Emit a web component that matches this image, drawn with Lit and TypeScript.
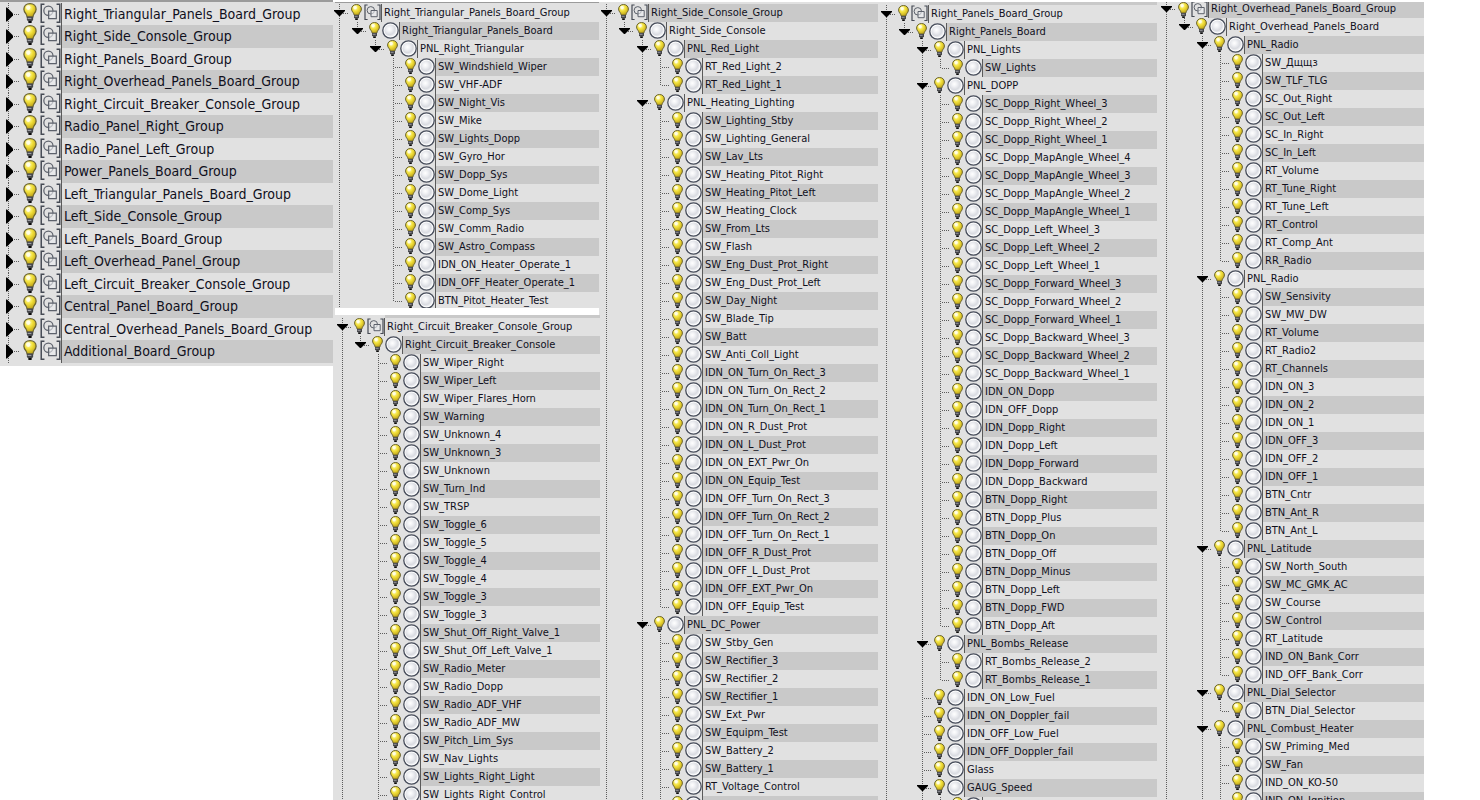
import { LitElement, html, css, svg, nothing } from "lit";
import { customElement } from "lit/decorators.js";

interface TreeRow {
  depth: number;
  name: string;
  open: boolean;
}

interface Tree {
  rows: TreeRow[];
  /** Levels whose guide line runs on past the last listed row. */
  running: number[];
}

/** One row per line, ">" marks a branch, each leading dot is one level. */
function tree(source: string, running: number[]): Tree {
  const rows = source
    .trim()
    .split("\n")
    .map((line) => {
      const [, dots, mark, name] = /^\s*(\.*)(>?)(.*)$/.exec(line)!;
      return { depth: dots.length, open: mark === ">", name: name.trim() };
    });
  return { rows, running };
}

function continues(t: Tree, index: number, level: number): boolean {
  for (let i = index + 1; i < t.rows.length; i++) {
    if (t.rows[i].depth < level) return false;
    if (t.rows[i].depth === level) return true;
  }
  return t.running.includes(level);
}

const GROUPS = [
  "Right_Triangular_Panels_Board_Group",
  "Right_Side_Console_Group",
  "Right_Panels_Board_Group",
  "Right_Overhead_Panels_Board_Group",
  "Right_Circuit_Breaker_Console_Group",
  "Radio_Panel_Right_Group",
  "Radio_Panel_Left_Group",
  "Power_Panels_Board_Group",
  "Left_Triangular_Panels_Board_Group",
  "Left_Side_Console_Group",
  "Left_Panels_Board_Group",
  "Left_Overhead_Panel_Group",
  "Left_Circuit_Breaker_Console_Group",
  "Central_Panel_Board_Group",
  "Central_Overhead_Panels_Board_Group",
  "Additional_Board_Group",
];

const TRIANGULAR = tree(
  `>Right_Triangular_Panels_Board_Group
.>Right_Triangular_Panels_Board
..>PNL_Right_Triangular
...SW_Windshield_Wiper
...SW_VHF-ADF
...SW_Night_Vis
...SW_Mike
...SW_Lights_Dopp
...SW_Gyro_Hor
...SW_Dopp_Sys
...SW_Dome_Light
...SW_Comp_Sys
...SW_Comm_Radio
...SW_Astro_Compass
...IDN_ON_Heater_Operate_1
...IDN_OFF_Heater_Operate_1
...BTN_Pitot_Heater_Test`,
  [0]
);

const BREAKER = tree(
  `>Right_Circuit_Breaker_Console_Group
.>Right_Circuit_Breaker_Console
..SW_Wiper_Right
..SW_Wiper_Left
..SW_Wiper_Flares_Horn
..SW_Warning
..SW_Unknown_4
..SW_Unknown_3
..SW_Unknown
..SW_Turn_Ind
..SW_TRSP
..SW_Toggle_6
..SW_Toggle_5
..SW_Toggle_4
..SW_Toggle_4
..SW_Toggle_3
..SW_Toggle_3
..SW_Shut_Off_Right_Valve_1
..SW_Shut_Off_Left_Valve_1
..SW_Radio_Meter
..SW_Radio_Dopp
..SW_Radio_ADF_VHF
..SW_Radio_ADF_MW
..SW_Pitch_Lim_Sys
..SW_Nav_Lights
..SW_Lights_Right_Light
..SW_Lights_Right_Control`,
  [0, 2]
);

const SIDE = tree(
  `>Right_Side_Console_Group
.>Right_Side_Console
..>PNL_Red_Light
...RT_Red_Light_2
...RT_Red_Light_1
..>PNL_Heating_Lighting
...SW_Lighting_Stby
...SW_Lighting_General
...SW_Lav_Lts
...SW_Heating_Pitot_Right
...SW_Heating_Pitot_Left
...SW_Heating_Clock
...SW_From_Lts
...SW_Flash
...SW_Eng_Dust_Prot_Right
...SW_Eng_Dust_Prot_Left
...SW_Day_Night
...SW_Blade_Tip
...SW_Batt
...SW_Anti_Coll_Light
...IDN_ON_Turn_On_Rect_3
...IDN_ON_Turn_On_Rect_2
...IDN_ON_Turn_On_Rect_1
...IDN_ON_R_Dust_Prot
...IDN_ON_L_Dust_Prot
...IDN_ON_EXT_Pwr_On
...IDN_ON_Equip_Test
...IDN_OFF_Turn_On_Rect_3
...IDN_OFF_Turn_On_Rect_2
...IDN_OFF_Turn_On_Rect_1
...IDN_OFF_R_Dust_Prot
...IDN_OFF_L_Dust_Prot
...IDN_OFF_EXT_Pwr_On
...IDN_OFF_Equip_Test
..>PNL_DC_Power
...SW_Stby_Gen
...SW_Rectifier_3
...SW_Rectifier_2
...SW_Rectifier_1
...SW_Ext_Pwr
...SW_Equipm_Test
...SW_Battery_2
...SW_Battery_1
...RT_Voltage_Control
...`,
  [0, 2, 3]
);

const PANELS = tree(
  `>Right_Panels_Board_Group
.>Right_Panels_Board
..>PNL_Lights
...SW_Lights
..>PNL_DOPP
...SC_Dopp_Right_Wheel_3
...SC_Dopp_Right_Wheel_2
...SC_Dopp_Right_Wheel_1
...SC_Dopp_MapAngle_Wheel_4
...SC_Dopp_MapAngle_Wheel_3
...SC_Dopp_MapAngle_Wheel_2
...SC_Dopp_MapAngle_Wheel_1
...SC_Dopp_Left_Wheel_3
...SC_Dopp_Left_Wheel_2
...SC_Dopp_Left_Wheel_1
...SC_Dopp_Forward_Wheel_3
...SC_Dopp_Forward_Wheel_2
...SC_Dopp_Forward_Wheel_1
...SC_Dopp_Backward_Wheel_3
...SC_Dopp_Backward_Wheel_2
...SC_Dopp_Backward_Wheel_1
...IDN_ON_Dopp
...IDN_OFF_Dopp
...IDN_Dopp_Right
...IDN_Dopp_Left
...IDN_Dopp_Forward
...IDN_Dopp_Backward
...BTN_Dopp_Right
...BTN_Dopp_Plus
...BTN_Dopp_On
...BTN_Dopp_Off
...BTN_Dopp_Minus
...BTN_Dopp_Left
...BTN_Dopp_FWD
...BTN_Dopp_Aft
..>PNL_Bombs_Release
...RT_Bombs_Release_2
...RT_Bombs_Release_1
..IDN_ON_Low_Fuel
..IDN_ON_Doppler_fail
..IDN_OFF_Low_Fuel
..IDN_OFF_Doppler_fail
..Glass
..>GAUG_Speed
...`,
  [0, 2, 3]
);

const OVERHEAD = tree(
  `>Right_Overhead_Panels_Board_Group
.>Right_Overhead_Panels_Board
..>PNL_Radio
...SW_Дщщз
...SW_TLF_TLG
...SC_Out_Right
...SC_Out_Left
...SC_In_Right
...SC_In_Left
...RT_Volume
...RT_Tune_Right
...RT_Tune_Left
...RT_Control
...RT_Comp_Ant
...RR_Radio
..>PNL_Radio
...SW_Sensivity
...SW_MW_DW
...RT_Volume
...RT_Radio2
...RT_Channels
...IDN_ON_3
...IDN_ON_2
...IDN_ON_1
...IDN_OFF_3
...IDN_OFF_2
...IDN_OFF_1
...BTN_Cntr
...BTN_Ant_R
...BTN_Ant_L
..>PNL_Latitude
...SW_North_South
...SW_MC_GMK_AC
...SW_Course
...SW_Control
...RT_Latitude
...IND_ON_Bank_Corr
...IND_OFF_Bank_Corr
..>PNL_Dial_Selector
...BTN_Dial_Selector
..>PNL_Combust_Heater
...SW_Priming_Med
...SW_Fan
...IND_ON_KO-50
...IND_ON_Ignition`,
  [0, 2, 3]
);

const bulb = html`<svg class="bulb" viewBox="0 0 11 16" aria-hidden="true">
  <path d="M5.5 .5C2.5 .5 .6 2.5 .6 5C.6 6.7 1.5 7.8 2.3 8.8C2.8 9.5 3 10.2 3.1 11H7.9C8 10.2 8.2 9.5 8.7 8.8C9.5 7.8 10.4 6.7 10.4 5C10.4 2.5 8.5 .5 5.5 .5Z"
    fill="url(#glass)" stroke="#6b6430" stroke-width="1" />
  <ellipse cx="4.1" cy="3.6" rx="1.7" ry="1.9" fill="#fffff0" opacity=".85" />
  <path d="M3 11H8V13.6L7 14.6H4L3 13.6Z" fill="#45464a" />
  <path d="M3.6 12.3H6.6" stroke="#a9abb0" stroke-width=".8" />
  <path d="M4.2 14.4H6.8V16H4.2Z" fill="#0c0c0c" />
</svg>`;

const sphere = html`<svg class="kind" viewBox="0 0 17 17" aria-hidden="true">
  <circle cx="8.5" cy="8.5" r="7.7" fill="#fff" stroke="#464c5a" stroke-width="1.3" />
  <circle cx="8.6" cy="8.6" r="6.2" fill="url(#ball)" />
</svg>`;

const group = html`<svg class="kind" viewBox="0 0 17 17" aria-hidden="true">
  <g fill="none" stroke="#454a54">
    <path d="M3.6 1H1V15.5H3.6M13.4 1H16V15.5H13.4" stroke-width="1.2" />
    <circle cx="6.8" cy="6.3" r="3.7" stroke="#5d626c" />
    <path d="M7 6.5H13.2V12.7H7Z" stroke="#5d626c" fill="#eceef1" fill-opacity=".6" />
  </g>
</svg>`;

const defs = svg`<defs>
  <radialGradient id="glass" cx="38%" cy="30%" r="72%">
    <stop offset="0" stop-color="#fffbc8" />
    <stop offset=".45" stop-color="#f3e23c" />
    <stop offset="1" stop-color="#bfa218" />
  </radialGradient>
  <radialGradient id="ball" cx="40%" cy="38%" r="64%">
    <stop offset="0" stop-color="#ffffff" />
    <stop offset=".3" stop-color="#f1f2f5" />
    <stop offset=".7" stop-color="#d9dbe1" />
    <stop offset="1" stop-color="#f6f7f9" />
  </radialGradient>
</defs>`;

@customElement("app-root")
export class AppRoot extends LitElement {
  static styles = css`
    :host {
      display: block;
      height: 100vh;
      overflow: hidden;
      background: #fff;
      color: #10101c;
      font-family: "DejaVu Sans Condensed", "DejaVu Sans", sans-serif;
      font-size: 11px;
    }
    .defs {
      display: block;
      width: 0;
      height: 0;
    }
    .board {
      display: grid;
      grid-template-columns: 333fr 267fr 280fr 280fr 264fr 56fr;
      height: 100%;
      align-items: start;
    }
    ul {
      list-style: none;
      margin: 0;
      padding: 0;
    }
    button {
      display: block;
      flex: none;
      border: 0;
      padding: 0;
      background: none;
      font: inherit;
    }
    svg {
      display: block;
      flex: none;
    }

    .overview {
      background: #e1e1e1;
      border-top: 2px solid #9b9b9b;
      padding: 1px 0 3px;
      font-size: 14px;
    }
    .column {
      height: 100vh;
      overflow: hidden;
      background: #e1e1e1;
    }
    .top {
      height: 2px;
      background: #fff;
    }
    .rule {
      height: 1px;
      margin: 0 1px 1px 2px;
      background: #9b9b9b;
    }
    .gap {
      height: 7px;
      margin: 0 1px 0 2px;
      background: #fff;
    }
    .stub {
      height: 3px;
      margin: 0 3px 0 49px;
      background: #c9c9c9;
    }
    .breaker-stub {
      margin: 0 0 0 52px;
    }
    .side-top {
      height: 2px;
    }
    .triangular {
      padding: 0 1px;
    }
    .breaker {
      padding-left: 4px;
    }
    .side {
      padding: 0 2px 0 1px;
    }
    .panels {
      padding: 0 3px 0 1px;
    }
    .overhead {
      padding-left: 1px;
    }

    .row {
      display: flex;
      height: 18px;
      overflow: hidden;
    }
    .triangular .row:last-child {
      height: 16px;
    }
    .overhead .row:first-child {
      height: 16px;
      align-items: flex-end;
    }
    .rail {
      width: 18px;
      height: 18px;
    }
    .gutter {
      width: 17px;
      height: 18px;
    }
    .guide {
      stroke: #5c5c5c;
      stroke-dasharray: 1 1;
      fill: none;
    }
    .bulb {
      width: 11px;
      height: 16px;
      margin-right: 2px;
    }
    .kind {
      width: 17px;
      height: 17px;
    }
    .label {
      flex: 1;
      min-width: 0;
      height: 18px;
      line-height: 18px;
      padding-left: 2px;
      border-left: 1px solid #5a5a5a;
      white-space: nowrap;
    }
    .even .row:nth-child(even) .label,
    .odd .row:nth-child(odd) .label {
      background: #c9c9c9;
    }

    .overview .row {
      height: 22px;
    }
    .overview .row:nth-child(even) {
      height: 23px;
    }
    .overview .gutter {
      width: 23px;
      height: 23px;
    }
    .overview .bulb {
      width: 14px;
      height: 20px;
      margin-right: 3px;
    }
    .overview .kind {
      width: 21px;
      height: 21px;
    }
    .overview .label {
      height: 23px;
      line-height: 23px;
    }
  `;

  private renderGutter(t: Tree, index: number) {
    const row = t.rows[index];
    const more = continues(t, index, row.depth);
    const lines = svg`
      <path class="guide" d=${more ? "M5.5 0V18" : "M5.5 0V10"} />
      <path class="guide" d="M7 9.5H15" />`;
    if (!row.open) {
      return html`<svg class="gutter" viewBox="0 0 17 18" aria-hidden="true">${lines}</svg>`;
    }
    return html`<button class="gutter" aria-label="Collapse" aria-expanded="true">
      <svg class="gutter" viewBox="0 0 17 18">
        ${lines}
        <path d="M0 6H11V7L6 12H5L0 7Z" fill="#000" />
      </svg>
    </button>`;
  }

  private renderRails(t: Tree, index: number) {
    return Array.from({ length: t.rows[index].depth }, (_, level) =>
      html`<svg class="rail" viewBox="0 0 18 18" aria-hidden="true">
        ${continues(t, index, level) ? svg`<path class="guide" d="M5.5 0V18" />` : nothing}
      </svg>`
    );
  }

  private renderTree(t: Tree, classes: string) {
    return html`<ul class=${classes}>
      ${t.rows.map(
        (row, i) => html`<li class="row">
          ${this.renderRails(t, i)}${this.renderGutter(t, i)}${bulb}${row.depth === 0 ? group : sphere}
          <span class="label">${row.name}</span>
        </li>`
      )}
    </ul>`;
  }

  render() {
    return html`
      <svg class="defs" aria-hidden="true">${defs}</svg>
      <main class="board">
        <section class="overview">
          <ul class="even">
            ${GROUPS.map(
              (name) => html`<li class="row">
                <button class="gutter" aria-label="Expand" aria-expanded="false">
                  <svg class="gutter" viewBox="0 0 23 23">
                    <path class="guide" d="M8.5 0V23M12 11.5H19" />
                    <path d="M6 4.5H7L13 10.5V12.5L7 18.5H6Z" fill="#000" />
                  </svg>
                </button>
                ${bulb}${group}
                <span class="label">${name}</span>
              </li>`
            )}
          </ul>
        </section>
        <section class="column">
          <div class="top"></div>
          <div class="rule"></div>
          ${this.renderTree(TRIANGULAR, "triangular even")}
          <div class="gap"></div>
          <div class="stub breaker-stub"></div>
          ${this.renderTree(BREAKER, "breaker even")}
        </section>
        <section class="column">
          <div class="top"></div>
          <div class="side-top"></div>
          ${this.renderTree(SIDE, "side odd")}
        </section>
        <section class="column">
          <div class="top"></div>
          <div class="stub"></div>
          ${this.renderTree(PANELS, "panels even")}
        </section>
        <section class="column">
          <div class="top"></div>
          ${this.renderTree(OVERHEAD, "overhead odd")}
        </section>
      </main>
    `;
  }
}
